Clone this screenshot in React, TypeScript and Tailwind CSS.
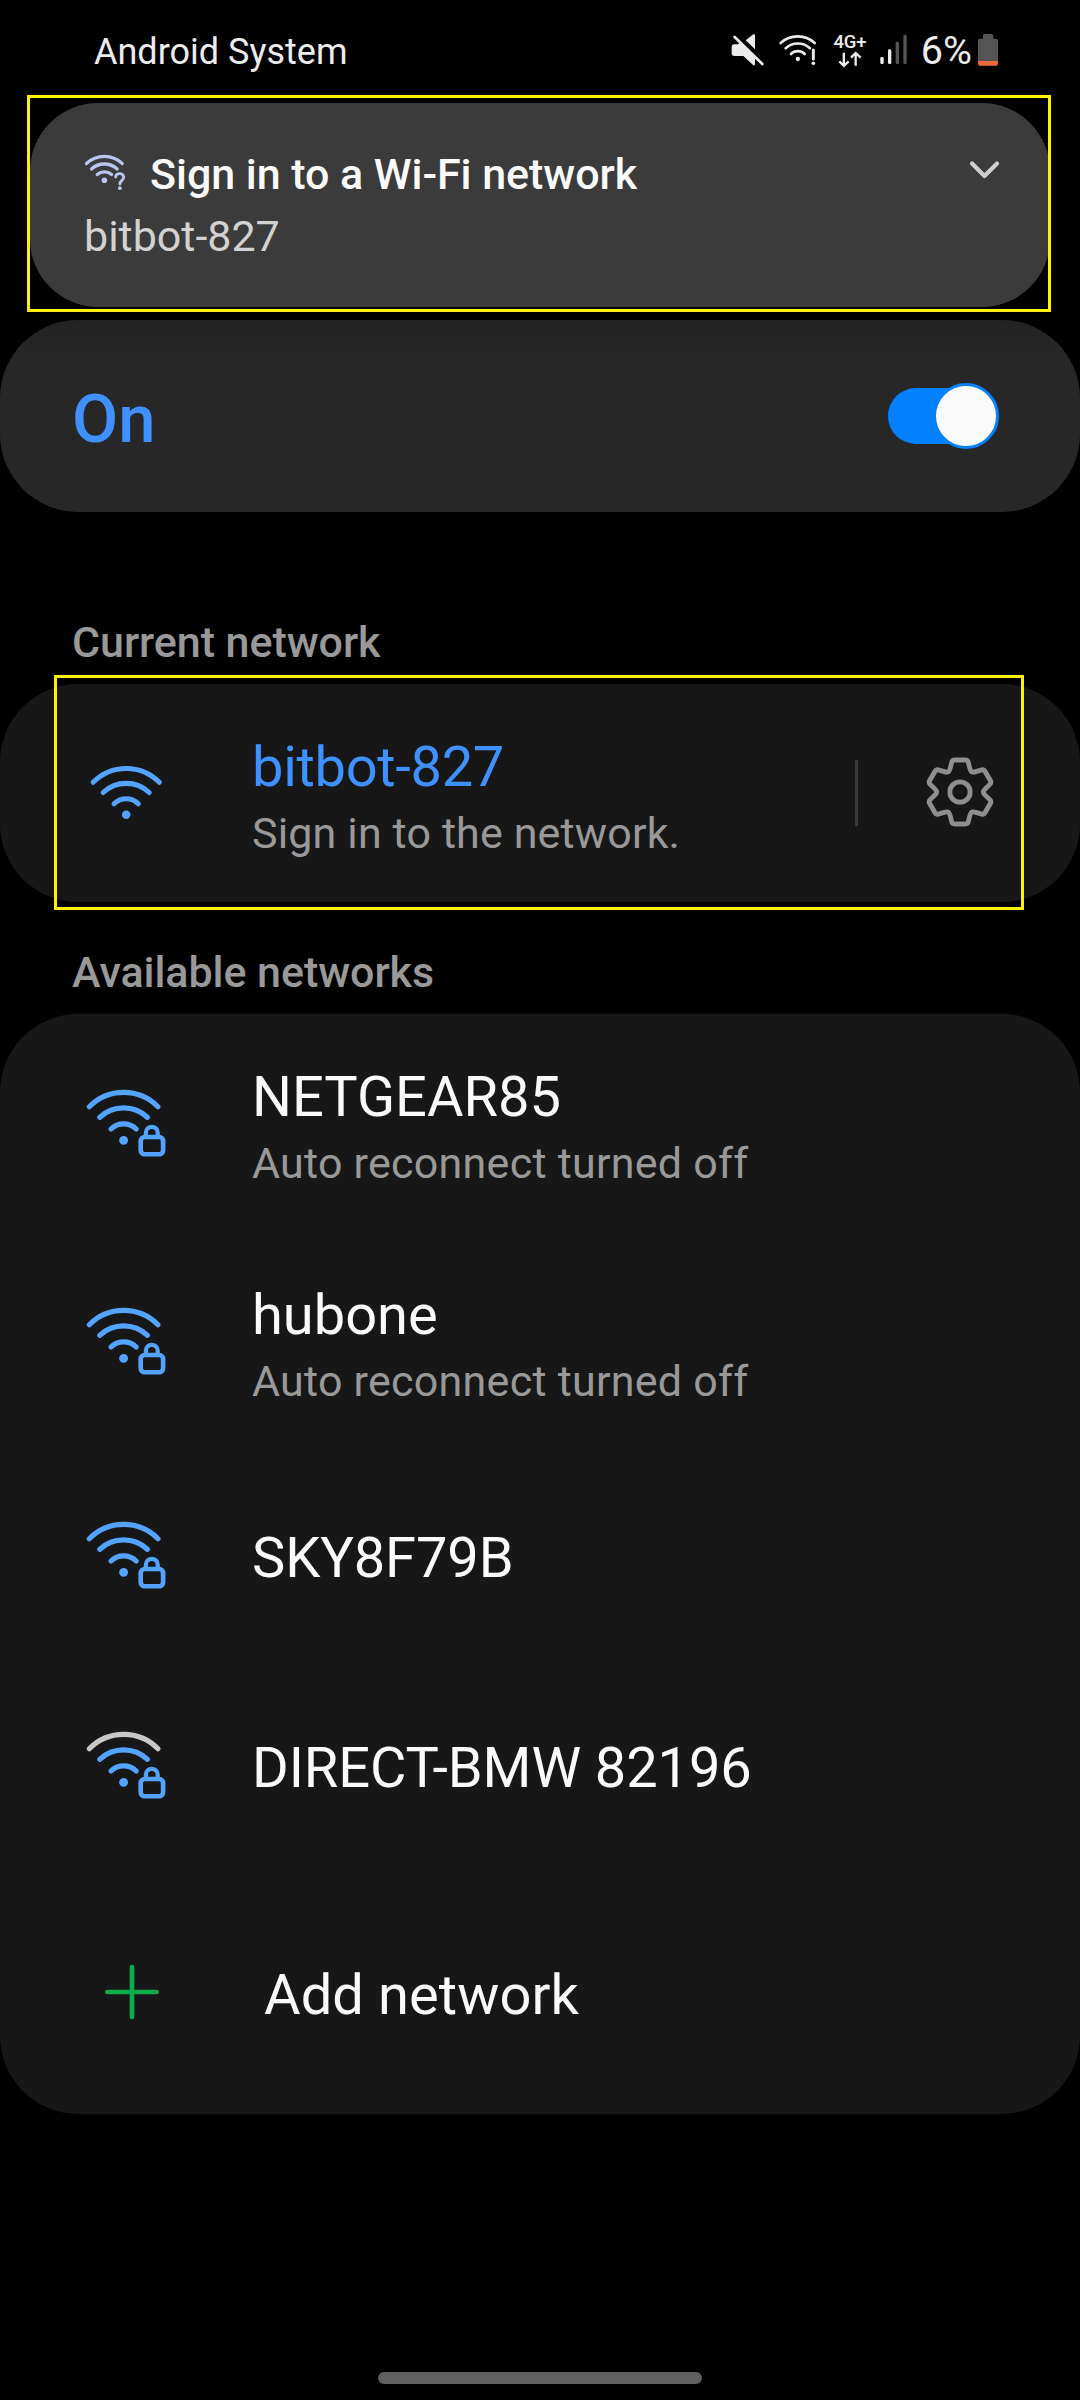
import React from "react";

const BLUE = "#54a3ff";

function MuteIcon() {
  return (
    <svg className="h-[40px] w-[34px]" viewBox="93 60 102 120" fill="#ececec">
      <path d="M103 103H114L120 97L165 141V163Q165 167 160 166L130 138H103Q95 138 95 130V111Q95 103 103 103Z" />
      <path d="M160 73Q165 71 165 76V118L137 91Z" />
      <path d="M104 80L187 162" stroke="#000" strokeWidth="13" transform="translate(5 -5)" />
      <path d="M104 81L187 162" stroke="#ececec" strokeWidth="8" strokeLinecap="round" />
    </svg>
  );
}

function StatusWifi() {
  return (
    <svg className="ml-[13px] h-[40px] w-[40px]" viewBox="234 60 120 120" fill="none" stroke="#ececec" strokeWidth="8" strokeLinecap="round">
      <path d="M242 99A76 76 0 0 1 344 99" />
      <path d="M257 115A53 53 0 0 1 330 115" />
      <path d="M273 132A29 29 0 0 1 314 132" />
      <circle cx="293.5" cy="147" r="6.5" fill="#ececec" stroke="none" />
      <path d="M340 120V147" strokeWidth="9" />
      <circle cx="340" cy="160" r="5.5" fill="#ececec" stroke="none" />
    </svg>
  );
}

function MobileData() {
  return (
    <div className="ml-[15px] flex h-[40px] w-[34px] flex-col items-center">
      <span className="mt-[4px] h-[17px] text-[18.5px] leading-[16px] font-medium tracking-[-0.3px] text-[#ececec]">4G+</span>
      <svg className="h-[18px] w-[30px] shrink-0" viewBox="405 122 90 54" fill="none" stroke="#ececec" strokeWidth="7">
        <path d="M431.500 127V166M418 153L431.500 166.500L446 153M467 166V129M453 142L467 128L482 142" />
      </svg>
    </div>
  );
}

function SignalBars() {
  return (
    <svg className="ml-[12px] h-[40px] w-[29px]" viewBox="534 60 87 120">
      <rect x="538" y="141" width="10" height="21" rx="4" fill="#ececec" />
      <rect x="561" y="118" width="10" height="44" rx="4" fill="#ececec" />
      <rect x="584" y="95" width="10" height="67" rx="4" fill="#555" />
      <rect x="607" y="74" width="10" height="88" rx="4" fill="#555" />
    </svg>
  );
}

function Battery() {
  return (
    <svg className="h-[40px] w-[22px]" viewBox="831 60 66 120">
      <path d="M849 86V77Q849 72 854 72H875Q880 72 880 77V86H888Q894 86 894 92V153H834V92Q834 86 840 86Z" fill="#555" />
      <path d="M834 153H894V161Q894 167 888 167H840Q834 167 834 161Z" fill="#ee6a3c" />
    </svg>
  );
}

function SignInWifi() {
  return (
    <svg className="h-[40px] w-[42px] shrink-0" viewBox="84 152 42 40" fill="none" stroke="#bac5f0" strokeWidth="3.3" strokeLinecap="round">
      <path d="M86.500 163.500A26 26 0 0 1 122.200 163.500" />
      <path d="M91.500 169A19 19 0 0 1 117.200 169" />
      <path d="M97.200 174.500A11 11 0 0 1 111.600 174.500" />
      <circle cx="104.400" cy="180.300" r="2.800" fill="#bac5f0" stroke="none" />
      <path d="M115.700 177C115.700 172.500 123.700 172.300 123.700 177.300C123.700 180.300 119.900 180.500 119.900 184" strokeWidth="2.900" />
      <circle cx="119.900" cy="188.200" r="1.900" fill="#bac5f0" stroke="none" />
    </svg>
  );
}

function WifiArcs({ outer = BLUE }: { outer?: string }) {
  return (
    <g fill="none" stroke={BLUE} strokeWidth="5.2" strokeLinecap="round">
      <path d="M5.300 18.700A48.200 48.200 0 0 1 74 18.700" stroke={outer} />
      <path d="M15.700 29.300A34.800 34.800 0 0 1 63.500 29.300" />
      <path d="M27 41A18 18 0 0 1 52.200 41" />
      <circle cx="39.600" cy="52.300" r="4.400" fill={BLUE} stroke="none" />
    </g>
  );
}

function LockedWifi({ outer }: { outer?: string }) {
  return (
    <svg className="ml-[84px] h-[72px] w-[84px] shrink-0" viewBox="0 0 84 72">
      <WifiArcs outer={outer} />
      <g fill="none" stroke={BLUE} strokeWidth="4.6">
        <rect x="56.700" y="49" width="22.400" height="17.300" rx="4" />
        <path d="M61.900 49V44.700C61.900 37 73.700 37 73.700 44.700V49" strokeWidth="4.200" />
      </g>
    </svg>
  );
}

const GEAR_ANGLES = [0, 60, 120, 180, 240, 300];

function Gear() {
  return (
    <svg className="h-[72px] w-[72px]" viewBox="-36 -36 72 72" fill="none" stroke="#8f8f8f" strokeWidth="4.8" strokeLinecap="round" strokeLinejoin="round">
      {GEAR_ANGLES.map((a) => (
        <path
          key={a}
          transform={`rotate(${a})`}
          d="M-11.700 -20.200Q-10.500 -20.900 -9.700 -24L-8.200 -30Q-7.700 -32 -5.500 -32H5.500Q7.700 -32 8.200 -30L9.700 -24Q10.500 -20.900 11.700 -20.200"
        />
      ))}
      <circle r="10.200" />
    </svg>
  );
}

function NetworkRow({ name, note }: { name: string; note?: string }) {
  return (
    <li className="flex h-[218px]">
      <div className="mt-[74px]">
        <LockedWifi />
      </div>
      <div className="ml-[84px] pt-[48px]">
        <div className="text-[56px] leading-[70px] text-[#fafafa]">{name}</div>
        <div className="text-[43px] leading-[62px] tracking-[0.25px] text-[#999]">{note}</div>
      </div>
    </li>
  );
}

function PlainRow({ name, outer }: { name: string; outer?: string }) {
  return (
    <li className="flex h-[210px]">
      <div className="mt-[70px]">
        <LockedWifi outer={outer} />
      </div>
      <div className="ml-[84px] pt-[73px] text-[56px] leading-[70px] tracking-[-0.1px] text-[#fafafa]">{name}</div>
    </li>
  );
}

export default function App() {
  return (
    <div className="h-[2400px] w-[1080px] overflow-hidden bg-black font-[Roboto,sans-serif]">
      <header className="flex h-[95px] items-start pr-[81px] pl-[94px]">
        <span className="pt-[31px] text-[36px] leading-[42px] text-[#ececec]">Android System</span>
        <div className="ml-auto flex items-start pt-[30px]">
          <MuteIcon />
          <StatusWifi />
          <MobileData />
          <SignalBars />
          <span className="mr-[5px] ml-[13px] pt-px text-[39.5px] leading-[40px] text-[#ececec]">6%</span>
          <Battery />
        </div>
      </header>

      <div className="relative mx-[27px] h-[217px] w-[1024px] px-[3px] pt-[8px]">
        <section className="h-[204px] w-[1020px] rounded-[68px] bg-[#3b3b3b] pl-[54px]">
          <div className="flex items-start pt-[49px]">
            <SignInWifi />
            <h1 className="-mt-[2px] ml-[24px] text-[43px] leading-[48px] font-medium tracking-[-0.05px] text-[#fafafa]">Sign in to a Wi-Fi network</h1>
            <svg className="mt-[5px] mr-[49px] ml-auto h-[24px] w-[36px]" viewBox="0 0 36 24" fill="none" stroke="#cfcfcf" strokeWidth="4.2" strokeLinecap="round" strokeLinejoin="round">
              <path d="M7 6.500L19.500 19L32 6.500" />
            </svg>
          </div>
          <p className="mt-[12px] text-[43px] leading-[52px] text-[#d2d2d2]">bitbot-827</p>
        </section>
        <div className="pointer-events-none absolute inset-0 border-[3px] border-[#fff200]" />
      </div>

      <section className="mt-[8px] flex h-[192px] justify-between rounded-[78px] bg-[#272727] bg-linear-to-b from-[#232323] to-[#272727] to-25% pr-[81px] pl-[72px]">
        <span className="pt-[59px] text-[67px] leading-[80px] font-medium text-[#3f91ff]">On</span>
        <div className="mt-[63px] flex h-[66px] w-[111px] items-center">
          <div className="h-[56px] w-[80px] rounded-l-full bg-[#0381fe]" />
          <div className="-ml-[35px] size-[66px] shrink-0 rounded-full border-[3px] border-[#0381fe] bg-[#fafafa]" />
        </div>
      </section>

      <h2 className="mt-[104px] h-[59px] pl-[72px] text-[43px] leading-[52px] font-medium tracking-[-0.05px] text-[#999]">Current network</h2>

      <div className="relative pt-[9px]">
        <section className="flex h-[218px] rounded-[78px] bg-[#171717]">
          <svg className="mt-[80px] ml-[88px] h-[70px] w-[81px] shrink-0" viewBox="0 0 84 72">
            <WifiArcs />
          </svg>
          <div className="ml-[83px] pt-[48px]">
            <div className="text-[56px] leading-[70px] tracking-[-0.3px] text-[#3f91ff]">bitbot-827</div>
            <div className="text-[43px] leading-[62px] tracking-[0.15px] text-[#999]">Sign in to the network.</div>
          </div>
          <div className="mt-[76px] ml-auto h-[66px] w-[3px] bg-[#3a3a3a]" />
          <div className="mt-[72px] mr-[84px] ml-[66px]">
            <Gear />
          </div>
        </section>
        <div className="pointer-events-none absolute top-0 left-[54px] h-[235px] w-[970px] border-[3px] border-[#fff200]" />
      </div>

      <h2 className="mt-[44px] h-[68px] pl-[72px] text-[43px] leading-[52px] font-medium tracking-[-0.05px] text-[#999]">Available networks</h2>

      <ul className="h-[1100px] rounded-[78px] bg-[#171717]">
        <NetworkRow name="NETGEAR85" note="Auto reconnect turned off" />
        <NetworkRow name="hubone" note="Auto reconnect turned off" />
        <PlainRow name="SKY8F79B" />
        <PlainRow name="DIRECT-BMW 82196" outer="#c8c8c8" />
        <li className="flex">
          <svg className="mt-[92px] ml-[102px] size-[60px] shrink-0" viewBox="0 0 60 60" stroke="#0aad4a" strokeWidth="4.700" strokeLinecap="round">
            <path d="M5.500 30H54.500M30 5V55" />
          </svg>
          <span className="ml-[102px] pt-[90px] text-[56px] leading-[70px] tracking-[0.1px] text-[#fafafa]">Add network</span>
        </li>
      </ul>

      <div className="mx-auto mt-[258px] h-[12px] w-[324px] rounded-full bg-[#5f5f5f]" />
    </div>
  );
}
